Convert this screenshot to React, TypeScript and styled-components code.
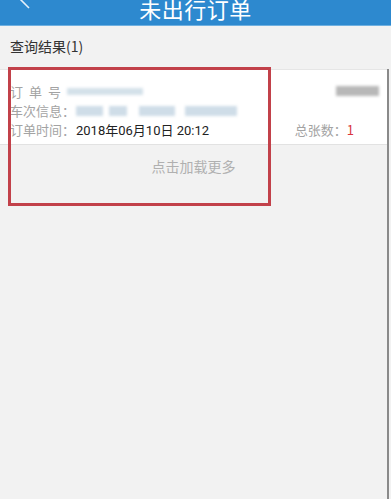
import * as React from "react";
import styled, { createGlobalStyle } from "styled-components";

const GlobalStyle = createGlobalStyle`
  html, body {
    margin: 0;
    padding: 0;
    background: #f2f2f2;
    font-family: "Noto Sans CJK SC", "Noto Sans", sans-serif;
  }
`;

const Page = styled.div`
  position: relative;
  width: 391px;
  height: 499px;
  overflow: hidden;
  background: #f2f2f2;
`;

const Header = styled.div`
  position: relative;
  height: 25px;
  background: #2d89cf;
  border-bottom: 1px solid #6fb0e0;
  display: flex;
  justify-content: center;
  align-items: flex-end;
  overflow: hidden;
`;

const Title = styled.div`
  color: #fff;
  font-size: 22px;
  line-height: 32px;
  margin-bottom: 1px;
  letter-spacing: 0.5px;
`;

const Back = styled.svg`
  position: absolute;
  left: 18px;
  top: 0;
`;

const Body = styled.div`
  display: flex;
  flex-direction: column;
  height: 474px;
`;

const SectionTitle = styled.div`
  padding: 10px 10px 0;
  height: 33px;
  font-size: 14px;
  line-height: 20px;
  color: #333;
`;

const Rest = styled.div`
  flex: 1;
  display: flex;
  flex-direction: column;
  border-right: 2px solid #8a8a8a;
  margin-right: 2px;
`;

const Card = styled.div`
  background: #fff;
  border-top: 1px solid #e6e6e6;
  border-bottom: 1px solid #e2e2e2;
  padding: 12px 8px 5px 10px;
  display: flex;
  justify-content: space-between;
`;

const Info = styled.div`
  display: flex;
  flex-direction: column;
`;

const Row = styled.div`
  display: flex;
  align-items: center;
  height: 19px;
  font-size: 13px;
  color: #a3a3a3;
`;

const Label = styled.span<{ spaced?: boolean }>`
  width: 66px;
  white-space: nowrap;
  letter-spacing: ${(p) => (p.spaced ? "6px" : "0")};
`;

const Value = styled.span`
  color: #222;
  font-family: "Roboto", "Noto Sans CJK SC", sans-serif;
  font-size: 13px;
`;

const Blur = styled.span<{ w: number; tone?: string }>`
  display: inline-block;
  width: ${(p) => p.w}px;
  height: 10px;
  margin-right: 8px;
  background: ${(p) => p.tone || "#cfdde8"};
  filter: blur(1.5px);
`;

const Side = styled.div`
  display: flex;
  flex-direction: column;
  justify-content: space-between;
  align-items: flex-end;
`;

const Total = styled.div`
  font-size: 13px;
  color: #a3a3a3;
  margin-right: 25px;
  line-height: 19px;

  b {
    font-weight: normal;
    color: #d9363e;
  }
`;

const LoadMore = styled.div`
  text-align: center;
  font-size: 14px;
  color: #b0b0b0;
  padding-top: 11px;
`;

const Mark = styled.div`
  position: absolute;
  left: 8px;
  top: 67px;
  width: 257px;
  height: 133px;
  border: 3px solid #c2414a;
  pointer-events: none;
`;

export default function App() {
  return (
    <Page>
      <GlobalStyle />
      <Header>
        <Back width="16" height="12" viewBox="0 0 16 12">
          <path d="M2 -1 L11 8" stroke="#e6f1fa" strokeWidth="1.6" fill="none" />
        </Back>
        <Title>未出行订单</Title>
      </Header>
      <Body>
        <SectionTitle>查询结果(1)</SectionTitle>
        <Rest>
          <Card>
            <Info>
              <Row>
                <Label spaced>订单号</Label>
                <Blur w={76} tone="#d4e1ea" style={{ marginLeft: -9, height: 7 }} />
              </Row>
              <Row>
                <Label>车次信息：</Label>
                <Blur w={27} />
                <Blur w={18} style={{ marginLeft: -2 }} />
                <Blur w={36} style={{ marginLeft: 4 }} />
                <Blur w={52} style={{ marginLeft: 2 }} />
              </Row>
              <Row>
                <Label>订单时间：</Label>
                <Value>2018年06月10日 20:12</Value>
              </Row>
            </Info>
            <Side>
              <Blur w={43} tone="#b8b8b8" style={{ marginRight: 0, marginTop: 4 }} />
              <Total>
                总张数：<b>1</b>
              </Total>
            </Side>
          </Card>
          <LoadMore>点击加载更多</LoadMore>
        </Rest>
      </Body>
      <Mark />
    </Page>
  );
}
